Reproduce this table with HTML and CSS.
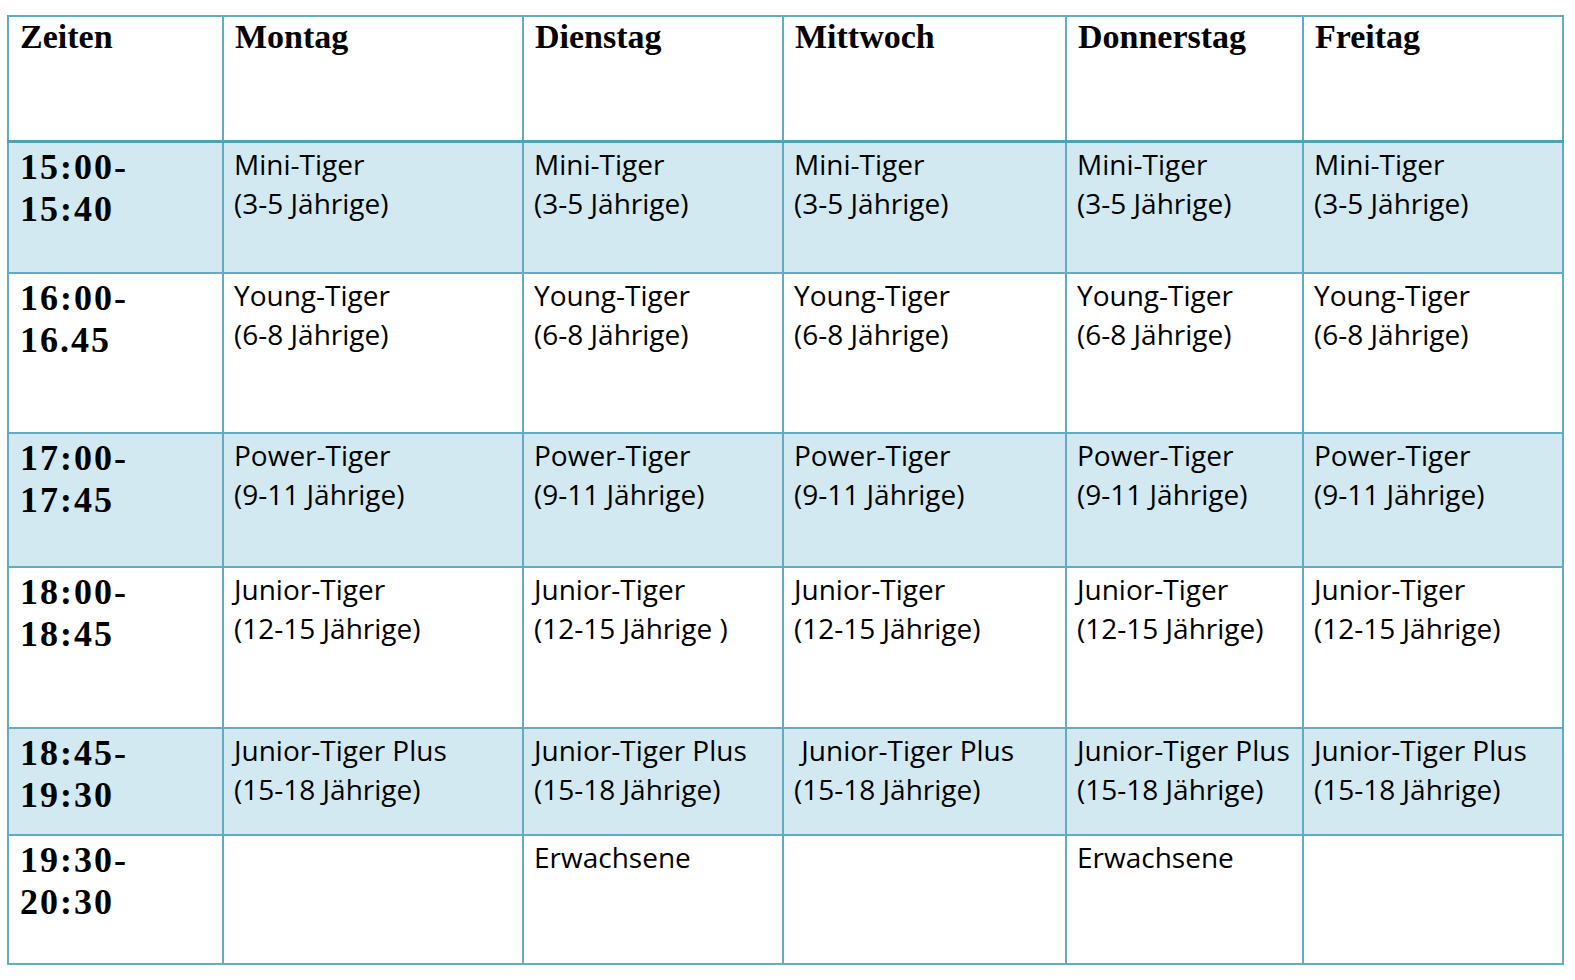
FILE: index.html
```html
<!DOCTYPE html>
<html lang="de">
<head>
<meta charset="utf-8">
<title>Trainingszeiten</title>
<link rel="stylesheet" href="styles.css">
</head>
<body>
<table class="schedule">
  <colgroup>
    <col class="c-time">
    <col class="c-mo">
    <col class="c-di">
    <col class="c-mi">
    <col class="c-do">
    <col class="c-fr">
  </colgroup>
  <thead>
    <tr class="r-head">
      <th>Zeiten</th>
      <th>Montag</th>
      <th>Dienstag</th>
      <th>Mittwoch</th>
      <th>Donnerstag</th>
      <th>Freitag</th>
    </tr>
  </thead>
  <tbody>
    <tr class="shaded r1">
      <td class="time">15:00-<br>15:40</td>
      <td>Mini-Tiger<br>(3-5 Jährige)</td>
      <td>Mini-Tiger<br>(3-5 Jährige)</td>
      <td>Mini-Tiger<br>(3-5 Jährige)</td>
      <td>Mini-Tiger<br>(3-5 Jährige)</td>
      <td>Mini-Tiger<br>(3-5 Jährige)</td>
    </tr>
    <tr class="r2">
      <td class="time">16:00-<br>16.45</td>
      <td>Young-Tiger<br>(6-8 Jährige)</td>
      <td>Young-Tiger<br>(6-8 Jährige)</td>
      <td>Young-Tiger<br>(6-8 Jährige)</td>
      <td>Young-Tiger<br>(6-8 Jährige)</td>
      <td>Young-Tiger<br>(6-8 Jährige)</td>
    </tr>
    <tr class="shaded r3">
      <td class="time">17:00-<br>17:45</td>
      <td>Power-Tiger<br>(9-11 Jährige)</td>
      <td>Power-Tiger<br>(9-11 Jährige)</td>
      <td>Power-Tiger<br>(9-11 Jährige)</td>
      <td>Power-Tiger<br>(9-11 Jährige)</td>
      <td>Power-Tiger<br>(9-11 Jährige)</td>
    </tr>
    <tr class="r4">
      <td class="time">18:00-<br>18:45</td>
      <td>Junior-Tiger<br>(12-15 Jährige)</td>
      <td>Junior-Tiger<br>(12-15 Jährige )</td>
      <td>Junior-Tiger<br>(12-15 Jährige)</td>
      <td>Junior-Tiger<br>(12-15 Jährige)</td>
      <td>Junior-Tiger<br>(12-15 Jährige)</td>
    </tr>
    <tr class="shaded r5">
      <td class="time">18:45-<br>19:30</td>
      <td>Junior-Tiger Plus<br>(15-18 Jährige)</td>
      <td>Junior-Tiger Plus<br>(15-18 Jährige)</td>
      <td>&nbsp;Junior-Tiger Plus<br>(15-18 Jährige)</td>
      <td>Junior-Tiger Plus<br>(15-18 Jährige)</td>
      <td>Junior-Tiger Plus<br>(15-18 Jährige)</td>
    </tr>
    <tr class="r6">
      <td class="time">19:30-<br>20:30</td>
      <td></td>
      <td>Erwachsene</td>
      <td></td>
      <td>Erwachsene</td>
      <td></td>
    </tr>
  </tbody>
</table>
</body>
</html>
```

FILE: styles.css
```css
html, body {
  background: #ffffff;
}

body {
  margin: 0;
  padding: 15px 0 0 7px;
}

.schedule {
  border-collapse: collapse;
  table-layout: fixed;
  width: 1555px;
  color: #000000;
}

.c-time { width: 215px; }
.c-mo { width: 300px; }
.c-di { width: 260px; }
.c-mi { width: 283px; }
.c-do { width: 237px; }
.c-fr { width: 260px; }

.schedule th,
.schedule td {
  border: 2px solid #62abc2;
  vertical-align: top;
  text-align: left;
  padding: 2px 4px 0 10px;
  white-space: nowrap;
  overflow: hidden;
}

.schedule th {
  font-family: "Liberation Serif", "Times New Roman", serif;
  font-weight: bold;
  font-size: 34px;
  line-height: 38px;
  padding-top: 1px;
  padding-left: 11px;
  border-bottom-width: 3px;
  border-bottom-color: #4fa1ba;
}

.schedule td {
  font-family: "Open Sans", "Noto Sans", sans-serif;
  font-size: 28px;
  line-height: 39px;
  color: #000000;
}

.schedule td.time {
  font-family: "Liberation Serif", "Times New Roman", serif;
  font-weight: bold;
  font-size: 36px;
  line-height: 42px;
  letter-spacing: 2px;
  padding-top: 3px;
  padding-left: 11px;
}

.shaded td {
  background: #d2e9f1;
}

.r-head { height: 125px; }
.r1 { height: 132px; }
.r2 { height: 160px; }
.r3 { height: 134px; }
.r4 { height: 161px; }
.r5 { height: 107px; }
.r6 { height: 129px; }
```
